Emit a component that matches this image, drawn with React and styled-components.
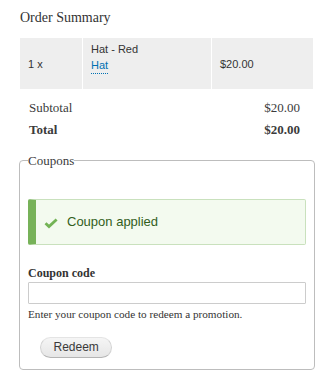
import React from "react";
import styled, { createGlobalStyle } from "styled-components";

const Global = createGlobalStyle`
  html, body { margin: 0; padding: 0; background: #fff; }
  body { font-family: "Liberation Serif", "Times New Roman", serif; color: #3b3b3b; }
`;

const Page = styled.div`
  width: 333px;
  box-sizing: border-box;
  padding: 9px 20px 0;
`;

const Title = styled.h2`
  margin: 0 0 12px;
  font-size: 14px;
  font-weight: normal;
  line-height: 17px;
  color: #333;
`;

const ItemsTable = styled.div`
  display: grid;
  grid-template-columns: 62px 128px 1fr;
  grid-auto-rows: 51px;
  gap: 1px;
  background: #fff;
  font-family: "Liberation Sans", Arial, sans-serif;
  font-size: 11px;
  color: #333;
`;

const Cell = styled.div`
  background: #eee;
  padding: ${(p) => (p.$top ? "3px 8px 0" : "0 8px")};
  display: flex;
  flex-direction: column;
  justify-content: ${(p) => (p.$top ? "flex-start" : "center")};
  line-height: 16px;
`;

const ProductLink = styled.a`
  color: #0071b3;
  text-decoration: none;
  border-bottom: 1px dotted #0071b3;
  align-self: flex-start;
`;

const Totals = styled.div`
  margin-top: 8px;
  padding: 0 13px 0 9px;
  font-size: 13px;
  line-height: 22px;
  color: #3b3b3b;
`;

const TotalRow = styled.div`
  display: flex;
  justify-content: space-between;
  font-weight: ${(p) => (p.$bold ? "bold" : "normal")};
`;

const Fieldset = styled.fieldset`
  margin: 12px -2px 0 -1px;
  padding: 0 8px 11px;
  border: 1px solid #bdbdbd;
  border-radius: 4px;
  min-width: 0;
`;

const Legend = styled.legend`
  padding: 0;
  font-size: 13px;
  line-height: 15px;
  color: #3b3b3b;
`;

const Message = styled.div`
  margin: 31px 0 20px;
  display: flex;
  align-items: center;
  gap: 9px;
  padding: 14px 8px 14px 8px;
  background: #f3faef;
  border: 1px solid #c9e1bd;
  border-left: 8px solid #77b259;
  border-radius: 2px;
  color: #325e1c;
  font-family: "Liberation Sans", Arial, sans-serif;
  font-size: 13px;
  line-height: 16px;
`;

const CheckIcon = styled.svg`
  width: 14px;
  height: 11px;
  flex: none;
  margin-top: 2px;
`;

const Label = styled.label`
  display: block;
  font-size: 12px;
  font-weight: bold;
  line-height: 16px;
  color: #333;
`;

const TextInput = styled.input`
  display: block;
  box-sizing: border-box;
  width: 100%;
  height: 22px;
  margin: 1px 0 0;
  border: 1px solid #ccc;
  border-radius: 1px;
  background: #fff;
`;

const Description = styled.div`
  margin-top: 3px;
  font-size: 11.2px;
  line-height: 14px;
  color: #333;
`;

const Button = styled.button`
  display: block;
  margin: 16px 0 0 12px;
  height: 21px;
  padding: 0 12.5px;
  border: 1px solid #d2d2d2;
  border-top-color: #e4e4e4;
  border-bottom-color: #b4b4b4;
  border-radius: 11px;
  background: linear-gradient(to bottom, #f5f5f5, #e6e6e6);
  color: #3a3a3a;
  font-family: "Liberation Sans", Arial, sans-serif;
  font-size: 12px;
  line-height: 15px;
`;

export default function App() {
  return (
    <Page>
      <Global />
      <Title>Order Summary</Title>
      <ItemsTable>
        <Cell>1 x</Cell>
        <Cell $top>
          <span>Hat - Red</span>
          <ProductLink href="#">Hat</ProductLink>
        </Cell>
        <Cell>$20.00</Cell>
      </ItemsTable>
      <Totals>
        <TotalRow>
          <span>Subtotal</span>
          <span>$20.00</span>
        </TotalRow>
        <TotalRow $bold>
          <span>Total</span>
          <span>$20.00</span>
        </TotalRow>
      </Totals>
      <Fieldset>
        <Legend>Coupons</Legend>
        <Message>
          <CheckIcon viewBox="0 0 14 11">
            <path d="M1.5 5.2 L5 8.6 L12.6 1.4" fill="none" stroke="#73b355" strokeWidth="2.8" strokeLinecap="butt" strokeLinejoin="miter" />
          </CheckIcon>
          <span>Coupon applied</span>
        </Message>
        <Label htmlFor="coupon">Coupon code</Label>
        <TextInput id="coupon" type="text" />
        <Description>Enter your coupon code to redeem a promotion.</Description>
        <Button type="button">Redeem</Button>
      </Fieldset>
    </Page>
  );
}
